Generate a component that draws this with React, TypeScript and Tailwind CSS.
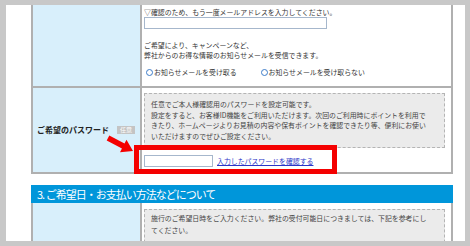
import React from "react";

function Radio({ label }: { label: string }) {
  return (
    <span className="flex items-center">
      <span className="w-[7px] h-[7px] rounded-full border border-[#3d7cc9] bg-white mr-[1px]" />
      <span>{label}</span>
    </span>
  );
}

export default function App() {
  return (
    <div className="relative w-[470px] h-[246px] bg-[#c8c8c8] pt-[5px] pl-[6px] pr-[5px] pb-[5px] overflow-hidden font-['Noto_Sans_CJK_JP',sans-serif] text-[#333]">
      <div className="bg-white h-full overflow-hidden">
        {/* table 1 */}
        <div className="ml-[25px] w-[422px] border-x-2 border-[#b0b0b0]">
          {/* row 1 */}
          <div className="flex border-b-2 border-[#b0b0b0]">
            <div className="w-[109px] shrink-0 bg-[#d8effb] border-r-2 border-[#b0b0b0]" />
            <div className="flex-1 pl-[2px] pt-[3px] pb-[9px] text-[6.9px] leading-[9px] whitespace-nowrap">
              <div>▽確認のため、もう一度メールアドレスを入力してください。</div>
              <div className="w-[183px] h-[12px] border border-[#a6b7cc] bg-white" />
              <div className="mt-[11px] leading-[10px]">
                ご希望により、キャンペーンなど、
                <br />
                弊社からのお得な情報のお知らせメールを受信できます。
              </div>
              <div className="mt-[7px] h-[10px] flex items-center pl-[2px]">
                <Radio label="お知らせメールを受け取る" />
                <span className="w-[24px]" />
                <Radio label="お知らせメールを受け取らない" />
              </div>
            </div>
          </div>
          {/* row 2 */}
          <div className="flex border-b-2 border-[#b0b0b0]">
            <div className="w-[109px] shrink-0 bg-[#d8effb] border-r-2 border-[#b0b0b0] flex items-center pl-[4px]">
              <span className="text-[8px] font-bold text-[#222] whitespace-nowrap">ご希望のパスワード</span>
              <span className="ml-[8px] w-[18px] h-[8px] bg-[#c4c4c4] text-white text-[6px] leading-[8px] flex items-center justify-center">
                任意
              </span>
            </div>
            <div className="flex-1 pl-[2px] pr-[6px] pt-[5px] pb-[5px]">
              <div className="border border-dashed border-[#b4b4b4] bg-[#ebebeb] pl-[6px] pt-[5px] pb-[6px] text-[6.9px] leading-[10.5px] text-[#444] whitespace-nowrap">
                任意でご本人様確認用のパスワードを設定可能です。
                <br />
                設定をすると、お客様ID機能をご利用いただけます。次回のご利用時にポイントを利用で
                <br />
                きたり、ホームページよりお見積の内容や保有ポイントを確認できたり等、便利にお使い
                <br />
                いただけますのでぜひご設定ください。
              </div>
              <div className="mt-[7px] h-[12px] flex items-center">
                <div className="w-[69px] h-[12px] border border-[#a6b7cc] bg-white" />
                <a href="#" className="ml-[4px] text-[6.9px] leading-[10px] text-[#2a35c8] underline whitespace-nowrap">
                  入力したパスワードを確認する
                </a>
              </div>
            </div>
          </div>
        </div>

        {/* section 3 */}
        <div className="ml-[25px] w-[422px] mt-[11px]">
          <div className="h-[18px] bg-[#0096da] text-white text-[11px] tracking-[-1px] leading-[18px] pl-[6px] whitespace-nowrap">
            3. ご希望日・お支払い方法などについて
          </div>
          <div className="flex border-x-2 border-[#b0b0b0] h-[60px]">
            <div className="w-[109px] shrink-0 bg-[#d8effb] border-r-2 border-[#b0b0b0]" />
            <div className="flex-1 pl-[2px] pr-[6px] pt-[6px]">
              <div className="h-full border border-dashed border-[#b4b4b4] bg-[#ebebeb] pl-[6px] pt-[2px] text-[6.9px] leading-[12px] text-[#444] whitespace-nowrap">
                施行のご希望日時をご入力ください。弊社の受付可能日につきましては、下記を参考にし
                <br />
                てください。
              </div>
            </div>
          </div>
        </div>
      </div>

      {/* red highlight box */}
      <div className="absolute left-[134px] top-[145px] w-[203px] h-[29px] border-[5px] border-[#f40000]" />

      {/* red arrow */}
      <svg className="absolute left-[104px] top-[128px]" width="34" height="28" viewBox="0 0 34 28">
        <polygon
          points="5.29,7.52 20.53,15.45 22.47,11.72 29,23 16.01,24.14 17.95,20.41 2.71,12.48"
          fill="#f40000"
        />
      </svg>
    </div>
  );
}
